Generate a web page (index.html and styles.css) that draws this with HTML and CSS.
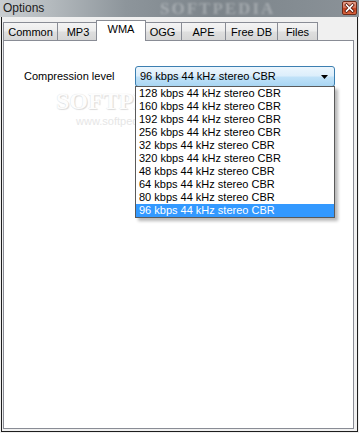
FILE: index.html
```html
<!DOCTYPE html>
<html>
<head>
<meta charset="utf-8">
<link rel="stylesheet" href="styles.css">
</head>
<body>
<div class="window">
  <div class="titlebar">
    <span class="title">Options</span>
    <span class="title-wm">SOFTPEDIA</span>
    <div class="close">
      <svg width="15" height="14" viewBox="0 0 15 14">
        <path d="M4.5 4 L10.5 10 M10.5 4 L4.5 10" stroke="#5a1a0c" stroke-width="3.2" stroke-linecap="square"/>
        <path d="M4.5 4 L10.5 10 M10.5 4 L4.5 10" stroke="#ffffff" stroke-width="1.6" stroke-linecap="square"/>
      </svg>
    </div>
  </div>
  <div class="client">
    <div class="tabs">
      <div class="tab t-common">Common</div>
      <div class="tab t-mp3">MP3</div>
      <div class="tab tab-active t-wma">WMA</div>
      <div class="tab t-ogg">OGG</div>
      <div class="tab t-ape">APE</div>
      <div class="tab t-freedb">Free DB</div>
      <div class="tab t-files">Files</div>
    </div>
    <div class="panel">
      <div class="row">
        <span class="label">Compression level</span>
        <div class="combo-wrap">
          <div class="combo">
            <span class="combo-text">96 kbps 44 kHz stereo CBR</span>
            <svg class="arrow" width="7" height="4" viewBox="0 0 7 4"><path d="M0 0 H7 L3.5 4 Z" fill="#000"/></svg>
          </div>
          <ul class="list">
            <li>128 kbps 44 kHz stereo CBR</li>
            <li>160 kbps 44 kHz stereo CBR</li>
            <li>192 kbps 44 kHz stereo CBR</li>
            <li>256 kbps 44 kHz stereo CBR</li>
            <li>32 kbps 44 kHz stereo CBR</li>
            <li>320 kbps 44 kHz stereo CBR</li>
            <li>48 kbps 44 kHz stereo CBR</li>
            <li>64 kbps 44 kHz stereo CBR</li>
            <li>80 kbps 44 kHz stereo CBR</li>
            <li class="sel">96 kbps 44 kHz stereo CBR</li>
          </ul>
        </div>
      </div>
      <div class="wm">
        <div class="wm-big">SOFTPE</div>
        <div class="wm-small">www.softpedia</div>
      </div>
    </div>
  </div>
</div>
</body>
</html>
```

FILE: styles.css
```css
html, body {
  margin: 0;
  padding: 0;
  background: #f0f0f0;
}
body {
  width: 359px;
  height: 433px;
  overflow: hidden;
  font-family: "Liberation Sans", Arial, sans-serif;
  font-size: 11px;
  color: #000;
}
.window {
  width: 359px;
  height: 433px;
  display: flex;
  flex-direction: column;
}
.titlebar {
  height: 17px;
  flex: 0 0 17px;
  position: relative;
  background: linear-gradient(90deg, #c9cdd0 0%, #b4babe 14%, #8d959b 35%, #7c848a 60%, #858d93 85%, #8b9298 100%);
  overflow: hidden;
}
.title {
  position: absolute;
  left: 3px;
  top: 1px;
  font-size: 12px;
  line-height: 14px;
  color: #1c1c1c;
}
.title-wm {
  position: absolute;
  left: 160px;
  top: 0;
  font-family: "Liberation Serif", serif;
  font-weight: bold;
  font-size: 17px;
  line-height: 17px;
  letter-spacing: 2px;
  color: rgba(255,255,255,0.28);
  filter: blur(1.2px);
}
.close {
  position: absolute;
  left: 342px;
  top: 1px;
  width: 15px;
  height: 14px;
  box-sizing: border-box;
  border: 1px solid #6e2a18;
  border-radius: 2px;
  background: linear-gradient(180deg, #e9a38d 0%, #d9745a 45%, #c4401f 55%, #d9663f 100%);
}
.close svg {
  position: absolute;
  left: -1px;
  top: -1px;
}
.client {
  flex: 1;
  margin: 0 1px 1px 1px;
  border: 1px solid #1e1e1e;
  border-top: none;
  padding: 3px 3px 2px 1px;
  display: flex;
  flex-direction: column;
  background: #f0f0f0;
}
.tabs {
  display: flex;
  align-items: flex-end;
  height: 20px;
  flex: 0 0 20px;
}
.tab {
  box-sizing: border-box;
  height: 18px;
  border: 1px solid #898c95;
  border-bottom: none;
  margin-right: -1px;
  background: linear-gradient(180deg, #f4f4f4 0%, #ececec 45%, #dedede 55%, #d6d6d6 100%);
  text-align: center;
  line-height: 16px;
  padding-top: 1px;
  white-space: nowrap;
}
.tab-active {
  position: relative;
  z-index: 2;
  height: 21px;
  margin-bottom: -1px;
  margin-left: -2px;
  margin-right: -3px;
  background: #fff;
  line-height: 15px;
  padding-top: 1px;
}
.t-common { width: 55px; }
.t-mp3 { width: 42px; }
.t-wma { width: 50px; }
.t-ogg { width: 39px; }
.t-ape { width: 45px; }
.t-freedb { width: 53px; }
.t-files { width: 41px; }
.panel {
  flex: 1;
  position: relative;
  background: #fff;
  border: 1px solid #898c95;
  padding: 25px 0 0 20px;
}
.row {
  display: flex;
  align-items: flex-start;
  position: relative;
  z-index: 2;
}
.label {
  width: 111px;
  line-height: 21px;
}
.combo-wrap {
  width: 200px;
  display: flex;
  flex-direction: column;
}
.combo {
  box-sizing: border-box;
  height: 21px;
  border: 1px solid #3c7fb1;
  border-radius: 3px;
  background: linear-gradient(180deg, #ecf6fd 0%, #dceefb 48%, #c1e2f8 52%, #a9d6f3 100%);
  display: flex;
  align-items: center;
  justify-content: space-between;
  padding: 0 6px 0 4px;
}
.combo-text {
  line-height: 19px;
}
.arrow {
  display: block;
}
.list {
  list-style: none;
  margin: -1px 0 0 0;
  padding: 0;
  border: 1px solid #5a5a5a;
  background: #fff;
  box-shadow: 3px 3px 3px rgba(0,0,0,0.28);
}
.list li {
  height: 13px;
  line-height: 13px;
  padding-left: 3px;
  white-space: nowrap;
}
.list li.sel {
  background: #3399ff;
  color: #fff;
}
.wm {
  position: absolute;
  left: 52px;
  top: 48px;
  z-index: 1;
  pointer-events: none;
}
.wm-big {
  font-family: "Liberation Serif", serif;
  font-weight: bold;
  font-size: 24px;
  line-height: 24px;
  color: #fdfdfd;
  text-shadow: 0 0 1px #d4d4d4, 1px 1px 1px #dcdcdc;
}
.wm-small {
  margin-left: 20px;
  margin-top: 2px;
  font-family: "Liberation Sans", sans-serif;
  font-size: 11px;
  line-height: 12px;
  color: #e6e6e6;
}
```
